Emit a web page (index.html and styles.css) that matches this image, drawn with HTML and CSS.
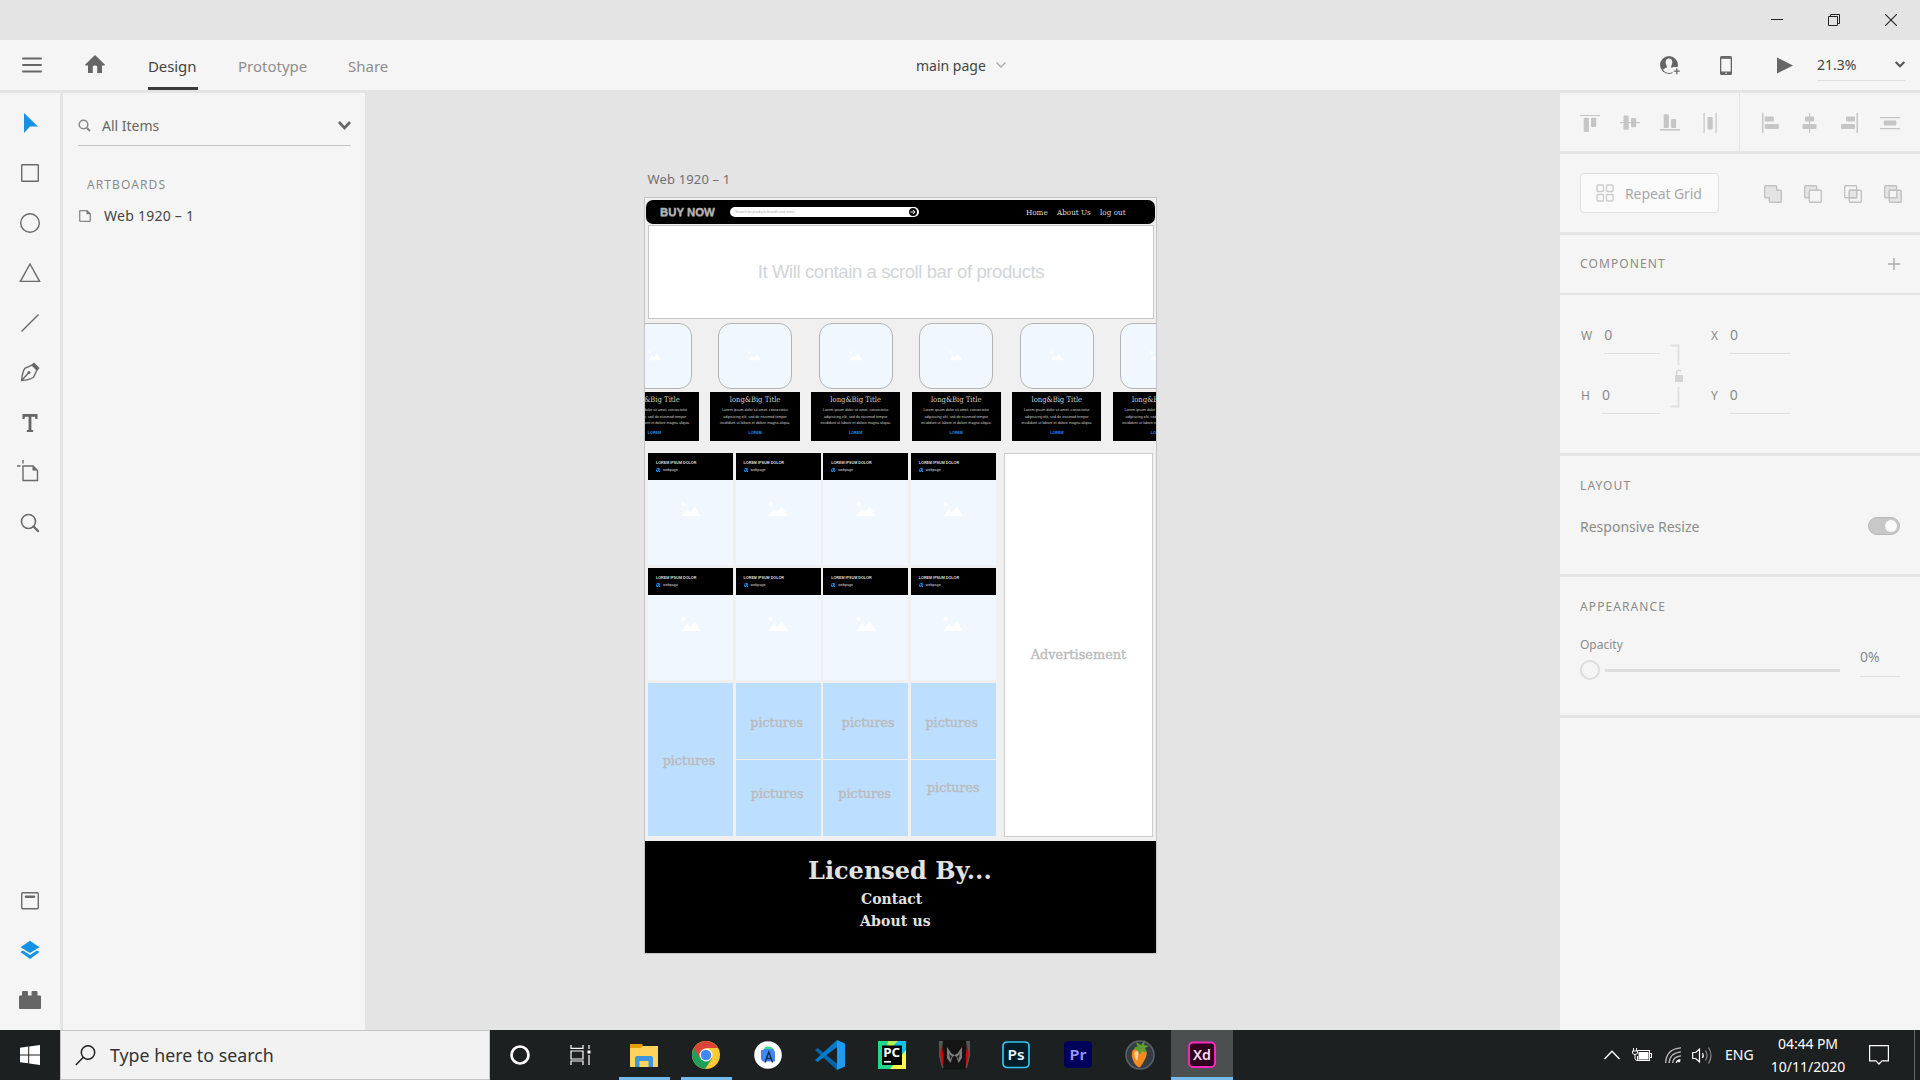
FILE: index.html
```html
<!DOCTYPE html>
<html lang="en">
<head>
<meta charset="utf-8">
<title>main page</title>
<link rel="stylesheet" href="styles.css">
</head>
<body>
<svg class="defs" width="0" height="0" aria-hidden="true">
  <symbol id="mountains" viewBox="0 0 20 15"><circle cx="2.5" cy="2.2" r="2.1"/><path d="M.5 14 6 7l3 3.2L13.800 4.500 20 14z"/></symbol>
  <symbol id="globe" viewBox="0 0 10 10"><circle cx="5" cy="5" r="4.800" fill="#1e90f0"/><path d="M2.500 1.500 5.500 3 4.500 5.500 6.500 8 4.500 8.800 3 5.500 1 4zM7.500 3l1.500 2-1 2-1-2z" fill="#07203a"/></symbol>
</svg>

<div class="app">
  <header class="titlebar">
    <svg width="12" height="12" viewBox="0 0 12 12"><path d="M0 5.500h12" stroke="#222"/></svg>
    <svg width="12" height="12" viewBox="0 0 12 12" fill="none" stroke="#222"><path d="M.5 2.500h9v9h-9z"/><path d="M2.500 2.500v-2h9v9h-2"/></svg>
    <svg width="12" height="12" viewBox="0 0 12 12"><path d="M0 0l12 12M12 0L0 12" stroke="#222" stroke-width="1.100"/></svg>
  </header>

  <div class="toolbar">
    <div class="toolbar-left">
      <svg width="20" height="16" viewBox="0 0 20 16" stroke="#666" stroke-width="2" stroke-linecap="round"><path d="M1 1.500h18M1 8h18M1 14.500h18"/></svg>
      <svg class="home" width="20" height="18" viewBox="0 0 20 18"><path d="M10 0 20 9.800l-.5.700H17V18h-4.800v-6c0-1-.8-1.500-2.200-1.500s-2.200.5-2.200 1.500v6H3v-7.500H.5L0 9.800z" fill="#666"/></svg>
      <nav class="tabs"><a class="tab tab-active">Design</a><a class="tab tab-prototype">Prototype</a><a class="tab tab-share">Share</a></nav>
    </div>
    <div class="doc-name"><span>main page</span><svg width="10" height="6" viewBox="0 0 10 6" fill="none" stroke="#aaa" stroke-width="1.300"><path d="M.5.500 5 5 9.500.500"/></svg></div>
    <div class="toolbar-right">
      <svg width="20" height="19" viewBox="0 0 20 19"><circle cx="9" cy="9" r="9" fill="#666"/><path d="M9 2.500c2.200 0 3.300 1.700 3.300 3.900 0 1.600-.6 2.700-1.100 3.500v1.600c1.300.7 3 1 3.700 2.300C13.500 16 11.500 17 9 17s-4.500-1-5.900-3.200c.7-1.300 2.400-1.600 3.700-2.300V9.900C6.300 9.100 5.700 8 5.700 6.400 5.700 4.200 6.800 2.500 9 2.500z" fill="#f5f5f5"/><path d="M12.500 11h7.500v8h-7.500z" fill="#f5f5f5"/><path d="M16.800 12.200v6M13.800 15.200h6" stroke="#666" stroke-width="1.300"/></svg>
      <svg class="phone" width="12" height="19" viewBox="0 0 12 19"><rect width="12" height="19" rx="1.500" fill="#666"/><path d="M1.300 2.800h9.400v12.700H1.300z" fill="#f5f5f5"/><circle cx="6" cy="17.200" r=".8" fill="#f5f5f5"/></svg>
      <svg class="play" width="16" height="17" viewBox="0 0 16 17"><path d="M0 .500 16 8.500 0 16.500z" fill="#666"/></svg>
      <div class="zoom-field"><span>21.3%</span><svg width="10" height="7" viewBox="0 0 10 7" fill="none" stroke="#555" stroke-width="2"><path d="M.7 1 5 5.300 9.300 1"/></svg></div>
    </div>
  </div>

  <main class="workspace">
    <aside class="tools">
      <div class="tool"><svg width="20" height="20" viewBox="0 0 20 20"><path d="M4 0 18 13.600H10L4 20z" fill="#1592e6" stroke="none"/></svg></div>
      <div class="tool"><svg width="20" height="20" viewBox="0 0 20 20"><rect x="1.700" y="1.700" width="16.600" height="16.600" rx=".5"/></svg></div>
      <div class="tool"><svg width="20" height="20" viewBox="0 0 20 20"><circle cx="10" cy="10" r="9.300"/></svg></div>
      <div class="tool"><svg width="22" height="20" viewBox="0 0 22 20"><path d="M11 1 20.600 18.400H1.400z"/></svg></div>
      <div class="tool"><svg width="20" height="20" viewBox="0 0 20 20"><path d="M1.500 18.500 18.500 1.500"/></svg></div>
      <div class="tool tool-pen"><svg width="20" height="20" viewBox="0 0 20 20"><path d="M1.600 18.600C2 14 2.500 9.500 4.800 6.300L12 3l5 5-3.500 7.300C10.200 17.700 6 18.300 1.600 18.600zM2 18l6.500-7"/><circle cx="9" cy="10.500" r="1.500" fill="#666" stroke="none"/><path d="M11.500 2.500 14 .500 19.500 6l-2 2.500z" fill="#666" stroke="none"/></svg></div>
      <div class="tool"><svg width="20" height="20" viewBox="0 0 20 20"><path d="M2.500 1h15v5h-2l-.6-2.300h-3.500v13l1.800.5V19H6.800v-1.800l1.800-.5v-13H5.100L4.500 6h-2z" fill="#666" stroke="none"/></svg></div>
      <div class="tool tool-artboard"><svg width="22" height="22" viewBox="0 0 22 22"><path d="M6 6h10l4.500 4.500V20.500H6zM6 0v3.500M0 6h3.500"/><path d="M15.500 6v4.500H20z" fill="#666" stroke="none"/></svg></div>
      <div class="tool"><svg width="20" height="20" viewBox="0 0 20 20"><circle cx="8.500" cy="8.500" r="7" stroke-width="1.600"/><path d="M13.500 13.500 18 18" stroke-width="2.400" stroke-linecap="round"/></svg></div>
      <div class="tool tool-library"><svg width="20" height="20" viewBox="0 0 20 20"><rect x="1.700" y="1.700" width="16.600" height="16" rx="1"/><path d="M6 5.800h8" stroke-width="2.600" stroke-linecap="round"/></svg></div>
      <div class="tool"><svg width="20" height="20" viewBox="0 0 20 20"><path d="M10 .800 19.500 7.300 10 13 .500 7.300z" fill="#1592e6" stroke="none"/><path d="M.5 12 3 10.500l7 4.500 7-4.500 2.500 1.500L10 19z" fill="#1592e6" stroke="none"/></svg></div>
      <div class="tool"><svg width="22" height="20" viewBox="0 0 22 20"><path d="M0 6.500Q0 5.500 1 5.500h2V2q0-1 1-1h4q1 0 1 1v3.500h3.500V2q0-1 1-1h4q1 0 1 1v3.500H21q1 0 1 1V18q0 1-1 1H1q-1 0-1-1z" fill="#666" stroke="none"/></svg></div>
    </aside>

    <aside class="layers">
      <div class="filter">
        <svg width="13" height="13" viewBox="0 0 13 13" fill="none" stroke="#888"><circle cx="5.500" cy="5.500" r="4.300" stroke-width="1.500"/><path d="M8.700 8.700 12 12" stroke-width="2"/></svg>
        <span>All Items</span>
        <svg width="13" height="9" viewBox="0 0 13 9" fill="none" stroke="#666" stroke-width="2.600"><path d="M1 1l5.500 6L12 1"/></svg>
      </div>
      <h2 class="heading">ARTBOARDS</h2>
      <div class="layer"><svg width="12" height="12" viewBox="0 0 12 12"><path d="M.7 1.200q0-.5.500-.5H8L11.300 4v6.800q0 .5-.5.500H1.200q-.5 0-.5-.5z" fill="none" stroke="#888" stroke-width="1.300"/><path d="M7.500 0v4.300H12z" fill="#777"/></svg><span>Web 1920 – 1</span></div>
    </aside>

    <section class="canvas">
      <div class="artboard-wrap">
        <div class="artboard-name">Web 1920 – 1</div>
        <div class="artboard">
          <div class="site-nav">
            <b class="logo">BUY NOW</b>
            <div class="site-search"><span>Search for products,brands and more</span><svg width="8" height="8" viewBox="0 0 8 8"><circle cx="4" cy="4" r="4" fill="#111"/><path d="M1.500 4h4.500M4 2l2 2-2 2" fill="none" stroke="#fff" stroke-width=".9"/></svg></div>
            <span class="nav-home">Home</span><span class="nav-about">About Us</span><span class="nav-out">log out</span>
          </div>
          <div class="hero">It Will contain a scroll bar of products</div>
          <div class="carousel">
            <div class="card"><div class="thumb"><svg><use href="#mountains"/></svg></div><div class="info"><h3>long&amp;Big Title</h3><p>Lorem ipsum dolor sit amet, consectetur<br>adipisicing elit, sed do eiusmod tempor<br>incididunt ut labore et dolore magna aliqua.</p><a>LOREM</a></div></div>
            <div class="card"><div class="thumb"><svg><use href="#mountains"/></svg></div><div class="info"><h3>long&amp;Big Title</h3><p>Lorem ipsum dolor sit amet, consectetur<br>adipisicing elit, sed do eiusmod tempor<br>incididunt ut labore et dolore magna aliqua.</p><a>LOREM</a></div></div>
            <div class="card"><div class="thumb"><svg><use href="#mountains"/></svg></div><div class="info"><h3>long&amp;Big Title</h3><p>Lorem ipsum dolor sit amet, consectetur<br>adipisicing elit, sed do eiusmod tempor<br>incididunt ut labore et dolore magna aliqua.</p><a>LOREM</a></div></div>
            <div class="card"><div class="thumb"><svg><use href="#mountains"/></svg></div><div class="info"><h3>long&amp;Big Title</h3><p>Lorem ipsum dolor sit amet, consectetur<br>adipisicing elit, sed do eiusmod tempor<br>incididunt ut labore et dolore magna aliqua.</p><a>LOREM</a></div></div>
            <div class="card"><div class="thumb"><svg><use href="#mountains"/></svg></div><div class="info"><h3>long&amp;Big Title</h3><p>Lorem ipsum dolor sit amet, consectetur<br>adipisicing elit, sed do eiusmod tempor<br>incididunt ut labore et dolore magna aliqua.</p><a>LOREM</a></div></div>
            <div class="card"><div class="thumb"><svg><use href="#mountains"/></svg></div><div class="info"><h3>long&amp;Big Title</h3><p>Lorem ipsum dolor sit amet, consectetur<br>adipisicing elit, sed do eiusmod tempor<br>incididunt ut labore et dolore magna aliqua.</p><a>LOREM</a></div></div>
          </div>
          <div class="content">
            <div class="left">
              <div class="tiles">
                <div class="tile"><div class="tile-head"><b>LOREM IPSUM DOLOR</b><span><svg><use href="#globe"/></svg>webpage</span></div><div class="tile-body"><svg><use href="#mountains"/></svg></div></div>
                <div class="tile"><div class="tile-head"><b>LOREM IPSUM DOLOR</b><span><svg><use href="#globe"/></svg>webpage</span></div><div class="tile-body"><svg><use href="#mountains"/></svg></div></div>
                <div class="tile"><div class="tile-head"><b>LOREM IPSUM DOLOR</b><span><svg><use href="#globe"/></svg>webpage</span></div><div class="tile-body"><svg><use href="#mountains"/></svg></div></div>
                <div class="tile"><div class="tile-head"><b>LOREM IPSUM DOLOR</b><span><svg><use href="#globe"/></svg>webpage</span></div><div class="tile-body"><svg><use href="#mountains"/></svg></div></div>
                <div class="tile"><div class="tile-head"><b>LOREM IPSUM DOLOR</b><span><svg><use href="#globe"/></svg>webpage</span></div><div class="tile-body"><svg><use href="#mountains"/></svg></div></div>
                <div class="tile"><div class="tile-head"><b>LOREM IPSUM DOLOR</b><span><svg><use href="#globe"/></svg>webpage</span></div><div class="tile-body"><svg><use href="#mountains"/></svg></div></div>
                <div class="tile"><div class="tile-head"><b>LOREM IPSUM DOLOR</b><span><svg><use href="#globe"/></svg>webpage</span></div><div class="tile-body"><svg><use href="#mountains"/></svg></div></div>
                <div class="tile"><div class="tile-head"><b>LOREM IPSUM DOLOR</b><span><svg><use href="#globe"/></svg>webpage</span></div><div class="tile-body"><svg><use href="#mountains"/></svg></div></div>
              </div>
              <div class="pictures">
                <div class="pic pic-tall">pictures</div>
                <div class="pic">pictures</div><div class="pic pic-right">pictures</div><div class="pic">pictures</div>
                <div class="pic pic-low">pictures</div><div class="pic pic-low">pictures</div><div class="pic pic-last">pictures</div>
              </div>
            </div>
            <div class="ad">Advertisement</div>
          </div>
          <footer class="site-footer"><h1>Licensed By...</h1><div class="contact">Contact</div><div class="about">About us</div></footer>
        </div>
      </div>
    </section>

    <aside class="props">
      <section class="align">
        <div class="align-group align-first">
          <svg viewBox="0 0 20 20"><path d="M0 2h20v1H0z"/><rect x="3.700" y="4.800" width="5.200" height="14.200" rx="1"/><rect x="11" y="4.800" width="5.200" height="9.200" rx="1"/></svg>
          <svg viewBox="0 0 20 20"><path d="M0 9h20v1.200H0z"/><rect x="3.500" y="2.500" width="5.200" height="14.200" rx="1"/><rect x="11" y="5" width="5.200" height="9.200" rx="1"/></svg>
          <svg viewBox="0 0 20 20"><path d="M0 16h20v1.600H0z"/><rect x="3.700" y="1.200" width="5.200" height="13.800" rx="1"/><rect x="11" y="6" width="5.200" height="9" rx="1"/></svg>
          <svg viewBox="0 0 20 20"><path d="M3.500 0h1.200v20H3.500zM15.500 0h1.200v20h-1.200z"/><rect x="7.500" y="4" width="5.200" height="12.500" rx="1"/></svg>
        </div>
        <div class="align-group">
          <svg viewBox="0 0 20 20"><path d="M2 0h1.500v20H2z"/><rect x="4.800" y="3.500" width="9" height="5" rx="1"/><rect x="4.800" y="11" width="14" height="5" rx="1"/></svg>
          <svg viewBox="0 0 20 20"><path d="M9 0h1.200v20H9z"/><rect x="5" y="3.500" width="9" height="5" rx="1"/><rect x="2.500" y="11" width="14" height="5" rx="1"/></svg>
          <svg viewBox="0 0 20 20"><path d="M16.500 0H18v20h-1.500z"/><rect x="6" y="3.500" width="9" height="5" rx="1"/><rect x="1" y="11" width="14" height="5" rx="1"/></svg>
          <svg viewBox="0 0 20 20"><path d="M0 4h20v1.200H0zM0 15h20v1.200H0z"/><rect x="3.800" y="7.500" width="12.500" height="5" rx="1"/></svg>
        </div>
      </section>
      <section class="repeat">
        <button class="repeat-button"><svg width="18" height="18" viewBox="0 0 18 18" fill="none" stroke="#ccc" stroke-width="1.400"><rect x="1" y="1" width="6.500" height="6.500" rx="1"/><rect x="10.500" y="1" width="6.500" height="6.500" rx="1"/><rect x="1" y="10.500" width="6.500" height="6.500" rx="1"/><rect x="10.500" y="10.500" width="6.500" height="6.500" rx="1"/></svg>Repeat Grid</button>
        <div class="bool">
          <svg viewBox="0 0 18 18"><path d="M1.700.700h10q1 0 1 1v3.600h3.600q1 0 1 1v10q0 1-1 1h-10q-1 0-1-1v-3.600H1.700q-1 0-1-1v-10q0-1 1-1z" fill="#e4e4e4"/></svg>
          <svg viewBox="0 0 18 18"><rect x=".7" y=".7" width="12" height="12" rx="1" fill="#e4e4e4"/><rect x="5.300" y="5.300" width="12" height="12" rx="1" fill="#f5f5f5"/></svg>
          <svg viewBox="0 0 18 18"><rect x=".7" y=".7" width="12" height="12" rx="1"/><rect x="5.300" y="5.300" width="12" height="12" rx="1"/><path d="M5.300 5.300h7.400v7.400H5.300z" fill="#e4e4e4"/></svg>
          <svg viewBox="0 0 18 18"><rect x=".7" y=".7" width="12" height="12" rx="1" fill="#e4e4e4"/><rect x="5.300" y="5.300" width="12" height="12" rx="1" fill="#e4e4e4"/><path d="M5.300 5.300h7.400v7.400H5.300z" fill="#f5f5f5"/></svg>
        </div>
      </section>
      <section class="component"><h2 class="heading">COMPONENT</h2><svg width="12" height="12" viewBox="0 0 12 12" stroke="#aaa" stroke-width="1.400"><path d="M6 0v12M0 6h12"/></svg></section>
      <section class="size">
        <div class="pair pair-size"><label class="field field-w"><small>W</small><span>0</span></label><label class="field"><small>H</small><span>0</span></label></div>
        <svg class="link" width="14" height="64" viewBox="0 0 14 64"><path d="M0 1.500h8.500V21M8.500 43v19.500H0" fill="none" stroke="#e0e0e0" stroke-width="1.800"/><rect x="5" y="31" width="8" height="7" rx=".8" fill="#d4d4d4"/><path d="M6.700 31v-2.700q0-2 2.200-2 1.600 0 2 1.300" fill="none" stroke="#d4d4d4" stroke-width="1.400"/></svg>
        <div class="pair pair-pos"><label class="field"><small>X</small><span>0</span></label><label class="field"><small>Y</small><span>0</span></label></div>
      </section>
      <section class="layout"><h2 class="heading">LAYOUT</h2><div class="resize-row"><span>Responsive Resize</span><i class="switch"></i></div></section>
      <section class="appearance">
        <h2 class="heading">APPEARANCE</h2>
        <div class="opacity"><div class="opacity-slider"><div class="opacity-label">Opacity</div><div class="slider"><i class="knob"></i><i class="track"></i></div></div><div class="opacity-value">0%</div></div>
      </section>
      <section class="rest"></section>
    </aside>
  </main>

  <footer class="taskbar">
    <div class="start"><svg width="20" height="20" viewBox="0 0 20 20" fill="#fff"><path d="M0 2.800 8.200 1.600V9.400H0zM9.200 1.400 20 0v9.400H9.200zM0 10.400h8.200v7.900L0 17.200zM9.200 10.400H20V20L9.200 18.400z"/></svg></div>
    <div class="search"><svg width="21" height="21" viewBox="0 0 21 21" fill="none" stroke="#222" stroke-width="1.500"><circle cx="13" cy="7.500" r="6.700"/><path d="M8.300 12.300.800 20"/></svg><span>Type here to search</span></div>
    <div class="task task-sys"><svg width="20" height="20" viewBox="0 0 20 20"><circle cx="10" cy="10" r="8.500" fill="none" stroke="#fff" stroke-width="2.700"/></svg></div>
    <div class="task task-sys task-view"><svg width="21" height="20" viewBox="0 0 21 20" fill="none" stroke="#fff" stroke-width="1.200"><path d="M1 0v3.400h12V0M1 20v-4h12v4M1 6h12v8H1zM19 0v4M19 10v10"/><path d="M17.500 5.500h3v3h-3z" fill="#fff" stroke="none"/></svg></div>
    <div class="task running"><svg width="28" height="28" viewBox="0 0 28 28"><path d="M0 3h12l1.500 3L12 8H0z" fill="#e5a000"/><path d="M0 7h11l2-2h15v21H0z" fill="#ffd35c"/><path d="M5 26V17q0-2 2-2h14q2 0 2 2v9h-4.500v-6h-9v6z" fill="#3d96db"/></svg></div>
    <div class="task running"><svg width="28" height="28" viewBox="0 0 28 28"><circle cx="14" cy="14" r="14" fill="#fcc934"/><path d="M14 14 1.900 7A14 14 0 0 0 13 28l7-10.500z" fill="#1e9e57"/><path d="M1.900 7A14 14 0 0 1 26.100 7H14L8 17.500z" fill="#db4437"/><circle cx="14" cy="14" r="6.500" fill="#fff"/><circle cx="14" cy="14" r="5.200" fill="#4285f4"/></svg></div>
    <div class="task"><svg width="28" height="28" viewBox="0 0 28 28"><circle cx="14" cy="14" r="13.800" fill="#fff"/><path d="M9.500 9Q10 5.500 14 5.500q5 0 6 4z" fill="#3ddc84"/><path d="M7 9h2l1-1h9l2 3v9.500H8.500L7 18z" fill="#4285f4"/><path d="M11 21.500l3.800-10.500L18.600 21.500M12.500 17.500h5" fill="none" stroke="#073042" stroke-width="1.400"/></svg></div>
    <div class="task"><svg width="30" height="30" viewBox="0 0 30 30"><path d="M0 10 2.500 8l19.500 15.500V30z" fill="#0065a9"/><path d="M0 20 22 0v7L2.500 22z" fill="#007acc"/><path d="M22 0l8 3.500v23L22 30z" fill="#1f9cf0"/></svg></div>
    <div class="task"><svg width="28" height="28" viewBox="0 0 28 28"><path d="M0 0h28v28H0z" fill="#21d789"/><path d="M15 0h13v12L17 13z" fill="#07c3f2"/><path d="M10 0h10L8 12z" fill="#b8ee52"/><path d="M28 9v19H12z" fill="#fcf84a"/><path d="M4 4.500h20v19.500H4z" fill="#000"/><text x="5.200" y="15.500" font-size="11.500" font-weight="700" textLength="17" lengthAdjust="spacingAndGlyphs" fill="#fff">PC</text><path d="M6 20h7v1.600H6z" fill="#fff"/></svg></div>
    <div class="task"><svg width="31" height="30" viewBox="0 0 31 30"><path d="M3 0h25l-1 29.500H4z" fill="#141414"/><path d="M0 1h4L2.500 14 4.500 28H3L0 16zM31 1h-4l1.500 13-2 14H28l3-12z" fill="#555"/><path d="M2.800 4 1.200 14 4.200 28V15zM28.200 4l1.600 10-3 14V15z" fill="#d80000"/><path d="M8 7l4.500 6.500 3 1.500 3-1.500L23 7v11l-3.500 5-2-6-2-1.500-2 1.500-2 6L8 18z" fill="#7c7c7c"/><path d="M10 14l3 2.500-1.500 3zM21 14l-3 2.500 1.500 3z" fill="#222"/></svg></div>
    <div class="task"><svg class="adobe" width="28" height="28" viewBox="0 0 28 28"><rect x="1" y="1" width="26" height="25.500" rx="4" fill="#001e2a" stroke="#31c5f0" stroke-width="1.700"/><text x="5.500" y="18.500" font-size="14.500" textLength="17" lengthAdjust="spacingAndGlyphs" fill="#e4f8ff">Ps</text></svg></div>
    <div class="task"><svg class="adobe" width="28" height="28" viewBox="0 0 28 28"><rect width="28" height="27" rx="4.500" fill="#00005b"/><text x="5.500" y="18.500" font-size="14.500" textLength="17" lengthAdjust="spacingAndGlyphs" fill="#9999ff">Pr</text></svg></div>
    <div class="task"><svg width="30" height="30" viewBox="0 0 30 30"><circle cx="15" cy="15" r="14" fill="#353c43" stroke="#59636b" stroke-width="1.500"/><path d="M8 10Q13 6.500 21 10q2 5-2 11-3 6-5 6.500Q9 25 7 17q-.5-5 1-7z" fill="#f58a1f"/><path d="M9.500 12q3-2 4 0-.5 7-1.500 9-3-4-2.500-9z" fill="#ffd0a0"/><path d="M13 11 8.500 8l4-1.500L11 2l5 3 4-5-1 5 5 1-4 2 2 5-5-2-2 4z" fill="#5c9e31"/></svg></div>
    <div class="task running task-current"><svg class="adobe" width="28" height="28" viewBox="0 0 28 28"><rect x="1" y="1.500" width="26" height="24.500" rx="4" fill="#2e001e" stroke="#ff2bc2" stroke-width="1.800"/><text x="5" y="18.500" font-size="14.500" textLength="18" lengthAdjust="spacingAndGlyphs" fill="#ffd9f2">Xd</text></svg></div>
    <div class="tray">
      <svg width="16" height="10" viewBox="0 0 16 10" fill="none" stroke="#fff" stroke-width="1.300"><path d="M.5 9 8 1.200 15.500 9"/></svg>
      <svg class="battery" width="20" height="14" viewBox="0 0 20 14"><path d="M5.500 2.500h12v10h-12V8M18 5.500h1.500v4H18" fill="none" stroke="#fff" stroke-width="1.100"/><path d="M6.500 4h10v7.500h-10z" fill="#fff"/><path d="M1.500 0v3M4.500 0v3M.5 3h5v2q-.5 1.500-2.500 1.500T.500 5zM3 6v4.500q0 2 2.500 2" fill="none" stroke="#fff"/></svg>
      <svg class="wifi" width="16" height="16" viewBox="0 0 16 16" fill="none" stroke="#bbb" stroke-width="1.300"><path d="M.7 16Q1 2 16 .8M4.200 16Q4.500 6 16 4.800M7.700 16Q8 9.500 16 8.800"/><path d="M11.300 16q.3-3 4.200-3.200" stroke="#fff"/><circle cx="14" cy="14" r="1.300" fill="#fff" stroke="none"/></svg>
      <svg class="volume" width="21" height="19" viewBox="0 0 21 19" fill="none" stroke="#fff" stroke-width="1.200"><path d="M.7 6.500h3L7.500 3v13l-3.800-3.500h-3zM10.500 7q1.500 2.500 0 5"/><path d="M13.500 4.500q3 5 0 10M16.500 1.500q5 8 0 16" stroke="#888"/></svg>
      <span class="lang">ENG</span>
      <div class="clock"><span class="time">04:44 PM</span><span>10/11/2020</span></div>
      <svg class="notice" width="20" height="20" viewBox="0 0 20 20" fill="none" stroke="#fff" stroke-width="1.200"><path d="M.6.600h18.800v15.200H13L10 19l-3-3.200H.600z"/></svg>
      <i class="peek"></i>
    </div>
  </footer>
</div>
</body>
</html>
```
FILE: styles.css
```css
* { box-sizing: border-box; }
body { margin: 0; font-family: "Noto Sans", "Open Sans", sans-serif; font-size: 14px; color: #444; background: #e4e4e4; }
svg { display: block; flex: none; }
h1, h2, h3, p { margin: 0; font-weight: 400; }
.defs { position: absolute; }
.app { width: 1920px; height: 1080px; display: flex; flex-direction: column; overflow: hidden; }

.titlebar { height: 40px; display: flex; justify-content: flex-end; align-items: center; gap: 45px; padding-right: 23px; }

.toolbar { height: 50px; background: #f5f5f5; display: flex; }
.toolbar-left { width: 916px; display: flex; padding-left: 22px; align-items: center; }
.home { margin: -2px 0 0 43px; }
.tabs { display: flex; align-self: stretch; margin-left: 43px; font-size: 15px; line-height: 53px; color: #8e8e8e; }
.tab { height: 50px; overflow: hidden; }
.tab-active { width: 50px; color: #444; border-bottom: 3px solid #3b3b3b; letter-spacing: -.1px; }
.tab-prototype { margin-left: 40px; width: 70px; }
.tab-share { margin-left: 40px; }
.doc-name { width: 744px; display: flex; align-items: center; gap: 10px; line-height: 50px; }
.doc-name span { padding-top: 1px; }
.toolbar-right { display: flex; align-items: center; flex: 1; }
.phone { margin-left: 40px; }
.play { margin-left: 45px; }
.zoom-field { margin: 0 0 9px 24px; width: 88px; height: 31px; padding-bottom: 2px; border-bottom: 1px solid #dedede; display: flex; align-items: center; justify-content: space-between; align-self: flex-end; }

.workspace { height: 940px; padding-top: 3px; display: flex; }
.tools { width: 60px; background: #f5f5f5; padding-top: 5px; display: flex; flex-direction: column; }
.tool { height: 50px; display: flex; align-items: center; justify-content: center; fill: none; stroke: #6a6a6a; stroke-width: 1.4; }
.tool-pen { padding-bottom: 2px; }
.tool-artboard { padding: 0 5px 4px 0; }
.tool-library { margin-top: 327px; padding-top: 2px; }
.layers { width: 302px; margin-left: 3px; background: #f5f5f5; padding-left: 15px; }
.filter { width: 273px; height: 53px; padding: 15px 0 3px; border-bottom: 1px solid #c4c4c4; display: flex; align-items: center; color: #666; }
.filter span { flex: 1; margin-left: 11px; }
.heading { font-size: 12px; letter-spacing: 1.1px; line-height: 20px; color: #8b8b8b; }
.layers .heading { margin: 29px 0 0 9px; }
.layer { display: flex; align-items: center; gap: 13px; margin: 11px 0 0 1px; line-height: 20px; letter-spacing: .25px; }

.canvas { width: 1195px; display: flex; padding: 74px 0 0 279px; }
.artboard-wrap { width: 513px; }
.artboard-name { height: 30px; padding-left: 3.5px; font-size: 13px; line-height: 24px; letter-spacing: .15px; color: #707070; }
.artboard { width: 513px; height: 757px; border: 1px solid #c4c4c4; background: #f0f0f0; overflow: hidden; }
.site-nav { margin: 2px 1px 0; height: 24px; background: #000; border-radius: 7px; display: flex; align-items: center; font: 8px "DejaVu Serif Condensed", "DejaVu Serif", serif; color: #ddd; white-space: nowrap; }
.logo { width: 70px; margin-left: 14px; font: bold 11.4px/12px "Liberation Sans", sans-serif; color: #b4b4b4; text-shadow: 0 1px 0 #555; -webkit-text-stroke: .3px #b4b4b4; }
.site-search { width: 189px; height: 10px; border-radius: 5px; background: #fff; display: flex; align-items: center; justify-content: space-between; padding: 0 2px 0 5px; font: 3.6px "Liberation Sans", sans-serif; color: #aaa; }
.nav-home { width: 31px; margin-left: 107px; }
.nav-about { width: 43px; }
.nav-out { letter-spacing: .05px; }
.hero { margin: 1px 2px 0 3px; height: 94px; border: 1px solid #c8c8c8; background: #fff; font: 18.5px/92px "Liberation Sans", Arial, sans-serif; letter-spacing: -.4px; color: #d2d5d8; text-align: center; }
.carousel { display: flex; gap: 11.4px; margin: 4px 0 0 -35.1px; width: 620px; }
.card { width: 89.2px; display: flex; flex-direction: column; align-items: center; flex: none; }
.thumb { width: 74px; height: 66px; border: 1px solid #b4b4b4; border-radius: 13px; background: #f0f7fe; display: flex; justify-content: center; padding-top: 27px; fill: #fff; }
.thumb svg { width: 13px; height: 10px; margin-left: -1px; }
.info { width: 100%; height: 49px; margin-top: 3px; background: #000; text-align: center; color: #ccc; font: 3.7px/6.5px "Liberation Sans", sans-serif; white-space: nowrap; }
.info h3 { font: 7.6px/15px "DejaVu Serif Condensed", "DejaVu Serif", serif; color: #ccc; }
.info p { height: 22px; }
.info a { display: block; color: #1e90f0; line-height: 8px; font-weight: 700; }
.content { display: flex; margin-top: 12px; justify-content: space-between; padding: 0 3px; }
.tiles { display: grid; grid-template-columns: repeat(4, 85px); grid-auto-rows: 112px; gap: 3px 2.6px; }
.tile { display: flex; flex-direction: column; }
.tile-head { height: 27px; background: #000; padding: 7px 0 0 8px; font: 3.7px/6px "Liberation Sans", sans-serif; color: #ddd; white-space: nowrap; }
.tile-head b { display: block; line-height: 7px; }
.tile-head span { display: flex; align-items: center; gap: 2.5px; }
.tile-head svg { width: 4.5px; height: 4.5px; }
.tile-body { flex: 1; background: #f0f7fe; display: flex; justify-content: center; padding-top: 22px; fill: #fff; }
.tile-body svg { width: 20px; height: 15px; }
.pictures { display: grid; grid-template-columns: repeat(4, 85px); grid-template-rows: 76px 76px; gap: 1px 2.6px; margin-top: 3px; }
.pic { background: #bddfff; display: flex; justify-content: center; align-items: center; font: 12.7px "DejaVu Serif", serif; color: #b9bbbd; -webkit-text-stroke: .4px #b9bbbd; padding: 2px 3px 0 0; }
.pic-tall { grid-row: span 2; padding: 1px 3px 0 0; }
.pic-right { padding-left: 8px; }
.pic-low { padding: 0 2px 10px 0; }
.pic-last { padding: 0 0 22px; }
.ad { width: 149px; height: 384px; border: 1px solid #ccc; background: #fff; display: flex; align-items: center; justify-content: center; font: 12.9px "DejaVu Serif", serif; color: #bcbcbc; -webkit-text-stroke: .4px #bcbcbc; padding-top: 18px; }
.site-footer { margin-top: 4px; height: 112px; background: #000; font: bold 14px/22px "DejaVu Serif", serif; color: #e2e2e2; }
.site-footer h1 { font: bold 24px/30px "DejaVu Serif", serif; padding: 15px 0 0 163px; }
.contact { padding-left: 216px; margin-top: 2px; }
.about { letter-spacing: .15px; padding-left: 215px; }

.props { width: 360px; display: flex; flex-direction: column; gap: 3px; color: #8b8b8b; }
.props section { background: #f5f5f5; }
.align { height: 58px; display: flex; }
.align-group { display: flex; align-items: center; gap: 20px; padding: 2px 0 0 20px; fill: #c6c6c6; }
.align-first { width: 180px; border-right: 1px solid #e4e4e4; }
.align svg { width: 20px; height: 20px; }
.repeat { height: 78px; display: flex; align-items: center; padding: 0 18px 0 20px; justify-content: space-between; }
.repeat-button { width: 139px; height: 40px; border: 1px solid #e0e0e0; border-radius: 4px; background: #fafafa; display: flex; align-items: center; gap: 11px; padding: 0 0 0 15px; font: inherit; letter-spacing: -.1px; color: #a8a8a8; white-space: nowrap; }
.bool { display: flex; gap: 22px; padding-top: 2px; fill: none; stroke: #c2c2c2; stroke-width: 1.4; }
.bool svg { width: 18px; height: 18px; }
.component { height: 58px; display: flex; align-items: center; justify-content: space-between; padding: 0 20px; }
.props .size { margin-top: -1px; height: 158px; display: flex; padding: 19px 0 0 21px; }
.pair { display: flex; flex-direction: column; gap: 20px; }
.pair-size { width: 79px; }
.pair-pos { width: 79px; margin-left: 27px; }
.field { display: flex; height: 40px; line-height: 41px; align-items: flex-start; gap: 12px; }
.field small { font-size: 12px; line-height: 44px; }
.field span { flex: 1; height: 40px; border-bottom: 1px solid #dedede; }
.link { margin: 30px 0 0 10px; }
.layout { height: 118px; padding: 20px 20px 0; }
.resize-row { display: flex; justify-content: space-between; align-items: center; margin-top: 21px; line-height: 20px; }
.switch { width: 32px; height: 18px; margin-top: -2px; border-radius: 9px; background: #c8c8c8; border: 1px solid #b8b8b8; display: flex; justify-content: flex-end; align-items: center; padding-right: 2px; }
.switch::after { content: ""; width: 12px; height: 12px; border-radius: 50%; background: #fafafa; }
.appearance { height: 138px; padding: 20px 20px 0; }
.opacity { display: flex; margin-top: 17px; gap: 20px; }
.opacity-slider { width: 260px; }
.opacity-label { font-size: 12px; line-height: 20px; padding-top: 1px; }
.slider { display: flex; align-items: center; gap: 5px; margin-top: 5px; }
.knob { width: 20px; height: 20px; border: 2px solid #dcdcdc; border-radius: 50%; }
.track { flex: 1; height: 3px; background: #dedede; }
.opacity-value { width: 40px; height: 43px; border-bottom: 1px solid #dedede; line-height: 46px; }
.rest { flex: 1; }

.taskbar { height: 50px; background: #1c2020; display: flex; color: #fff; }
.start { width: 60px; display: flex; align-items: center; justify-content: center; }
.search { width: 430px; background: #f2f2f2; border: 1px solid #c4c4c4; display: flex; align-items: center; gap: 14px; padding-left: 14px; font-size: 17.8px; color: #333; }
.task { width: 62px; display: flex; align-items: center; justify-content: center; }
.task-sys { width: 60px; }
.task-view { width: 63px; padding-right: 3px; }
.running { background: linear-gradient(#76b9ed, #76b9ed) center bottom / 51px 3px no-repeat; }
.task-current { background-color: #4b4f4f; background-size: 62px 3px; }
.adobe { font-weight: 600; }
.tray { display: flex; align-items: center; margin-left: 371px; }
.battery { margin-left: 12px; }
.wifi { margin-left: 13px; }
.volume { margin-left: 11px; }
.lang { margin-left: 12px; width: 38px; line-height: 50px; }
.clock { width: 90px; display: flex; flex-direction: column; align-items: center; line-height: 23px; }
.time { letter-spacing: -.1px; }
.notice { margin-left: 16px; }
.peek { width: 1px; height: 50px; margin-left: 25px; background: #666; }
```
